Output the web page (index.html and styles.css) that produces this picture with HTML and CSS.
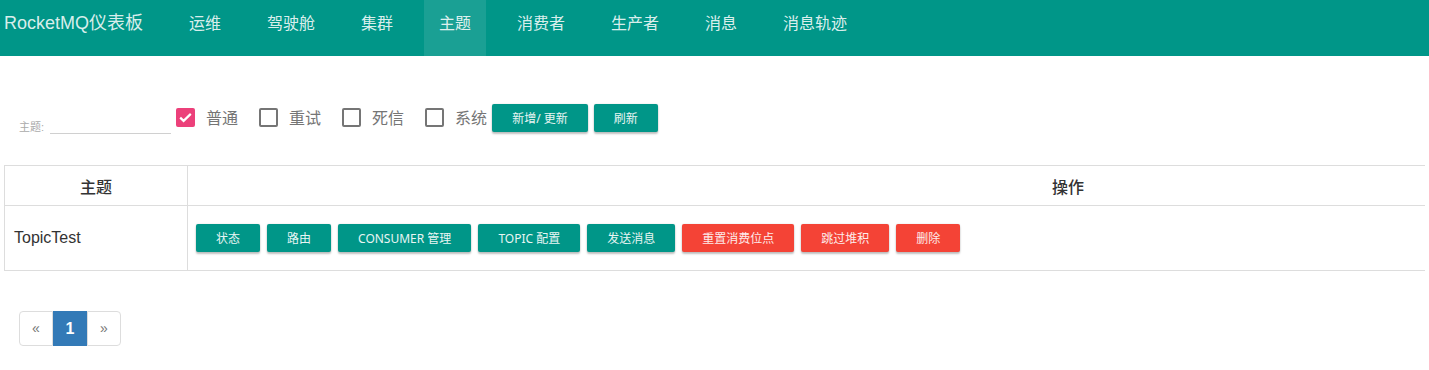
FILE: index.html
```html
<!DOCTYPE html>
<html lang="zh-CN">
<head>
    <meta charset="UTF-8">
    <meta name="viewport" content="width=device-width, initial-scale=1.0">
    <title>RocketMQ仪表板</title>
    <link rel="stylesheet" href="styles.css">
</head>
<body>
    <nav class="navbar">
        <div class="brand">RocketMQ仪表板</div>
        <ul class="nav-list">
            <li class="nav-item">运维</li>
            <li class="nav-item">驾驶舱</li>
            <li class="nav-item">集群</li>
            <li class="nav-item active">主题</li>
            <li class="nav-item">消费者</li>
            <li class="nav-item">生产者</li>
            <li class="nav-item">消息</li>
            <li class="nav-item">消息轨迹</li>
        </ul>
    </nav>

    <div class="page">
        <div class="filter-row">
            <div class="field">
                <label class="field-label">主题:</label>
                <input type="text" class="field-input">
            </div>
            <label class="check checked"><span class="box"><svg viewBox="0 0 19 19" width="19" height="19"><path d="M4.2 9.6l3.4 3.3L14.8 5.9" fill="none" stroke="#fff" stroke-width="2.2"/></svg></span>普通</label>
            <label class="check"><span class="box"></span>重试</label>
            <label class="check"><span class="box"></span>死信</label>
            <label class="check"><span class="box"></span>系统</label>
            <button class="btn btn-teal">新增/ 更新</button>
            <button class="btn btn-teal">刷新</button>
        </div>

        <div class="table-wrap">
            <table class="topic-table">
                <thead>
                    <tr>
                        <th class="col-topic">主题</th>
                        <th>操作</th>
                    </tr>
                </thead>
                <tbody>
                    <tr>
                        <td class="topic-name">TopicTest</td>
                        <td>
                            <div class="actions">
                                <button class="btn btn-teal">状态</button>
                                <button class="btn btn-teal">路由</button>
                                <button class="btn btn-teal">CONSUMER 管理</button>
                                <button class="btn btn-teal">TOPIC 配置</button>
                                <button class="btn btn-teal">发送消息</button>
                                <button class="btn btn-red">重置消费位点</button>
                                <button class="btn btn-red">跳过堆积</button>
                                <button class="btn btn-red">删除</button>
                            </div>
                        </td>
                    </tr>
                </tbody>
            </table>
        </div>

        <ul class="pagination">
            <li class="page-item">&laquo;</li>
            <li class="page-item current">1</li>
            <li class="page-item">&raquo;</li>
        </ul>
    </div>
</body>
</html>
```

FILE: styles.css
```css
body {
    margin: 0;
    font-family: "Liberation Sans", "Noto Sans CJK SC", sans-serif;
    color: #333;
    background: #fff;
    overflow: hidden;
}
.navbar {
    height: 56px;
    background: #009688;
    display: flex;
    padding-left: 4px;
}
.brand {
    width: 154px;
    font-size: 18px;
    line-height: 22px;
    padding-top: 12px;
    color: rgba(255,255,255,0.85);
}
.nav-list {
    list-style: none;
    margin: 0 0 0 16px;
    padding: 0;
    display: flex;
    gap: 16px;
}
.nav-item {
    height: 56px;
    box-sizing: border-box;
    padding: 14px 15px 0;
    font-size: 16px;
    line-height: 20px;
    color: rgba(255,255,255,0.87);
}
.nav-item.active {
    background: rgba(255,255,255,0.1);
}
.page {
    padding: 0 4px;
}
.filter-row {
    display: flex;
    align-items: center;
    height: 31px;
    margin-top: 46px;
    padding-left: 15px;
}
.field {
    align-self: flex-end;
    display: flex;
    align-items: flex-end;
    margin-right: 5px;
    margin-bottom: -1px;
}
.field-label {
    font-size: 11px;
    color: #aaa;
    line-height: 14px;
    margin-right: 6px;
    margin-bottom: 0;
}
.field-input {
    width: 121px;
    height: 20px;
    padding: 0;
    border: none;
    border-bottom: 1px solid #d0d0d0;
    outline: none;
}
.check {
    display: flex;
    align-items: center;
    font-size: 16px;
    color: #757575;
    margin-right: 21px;
    margin-top: -1px;
}
.check:nth-of-type(4) {
    margin-right: 5px;
}
.box {
    width: 19px;
    height: 19px;
    box-sizing: border-box;
    border: 2px solid #757575;
    border-radius: 2px;
    margin-right: 11px;
    display: flex;
    align-items: center;
    justify-content: center;
}
.check.checked .box {
    background: #ec407a;
    border-color: #ec407a;
}
.check.checked .box svg {
    flex: none;
}
.btn {
    height: 28px;
    min-width: 64px;
    padding: 0 20px;
    border: none;
    border-radius: 2px;
    font-family: "Noto Sans", "Noto Sans CJK SC", sans-serif;
    font-size: 12px;
    font-weight: 400;
    color: #e8f5f3;
    box-shadow: 0 2px 2px rgba(0,0,0,0.24), 0 0 2px rgba(0,0,0,0.12);
    cursor: pointer;
}
.filter-row .btn + .btn {
    margin-left: 6px;
}
.btn-teal {
    background: #009688;
}
.btn-red {
    background: #f44336;
    color: #fdeceb;
}
.table-wrap {
    margin-top: 32px;
    overflow: hidden;
}
.topic-table {
    width: 1945px;
    border-collapse: collapse;
}
.topic-table th,
.topic-table td {
    border: 1px solid #ddd;
}
.topic-table th {
    height: 37px;
    font-size: 16px;
    font-weight: 500;
    color: #333;
    text-align: center;
}
.col-topic {
    width: 180px;
}
.topic-table td {
    height: 64px;
    padding: 0 8px;
}
.topic-name {
    font-size: 16px;
    color: #333;
    padding-left: 9px !important;
}
.actions {
    display: flex;
    gap: 7px;
}
.pagination {
    list-style: none;
    display: flex;
    margin: 40px 0 0 15px;
    padding: 0;
}
.page-item {
    width: 34px;
    height: 35px;
    box-sizing: border-box;
    border: 1px solid #ddd;
    font-size: 14px;
    line-height: 33px;
    text-align: center;
    color: #777;
}
.page-item:first-child {
    border-radius: 4px 0 0 4px;
}
.page-item:last-child {
    border-radius: 0 4px 4px 0;
}
.page-item.current {
    background: #337ab7;
    border-color: #337ab7;
    color: #fff;
    font-weight: bold;
    font-size: 16px;
}
```
